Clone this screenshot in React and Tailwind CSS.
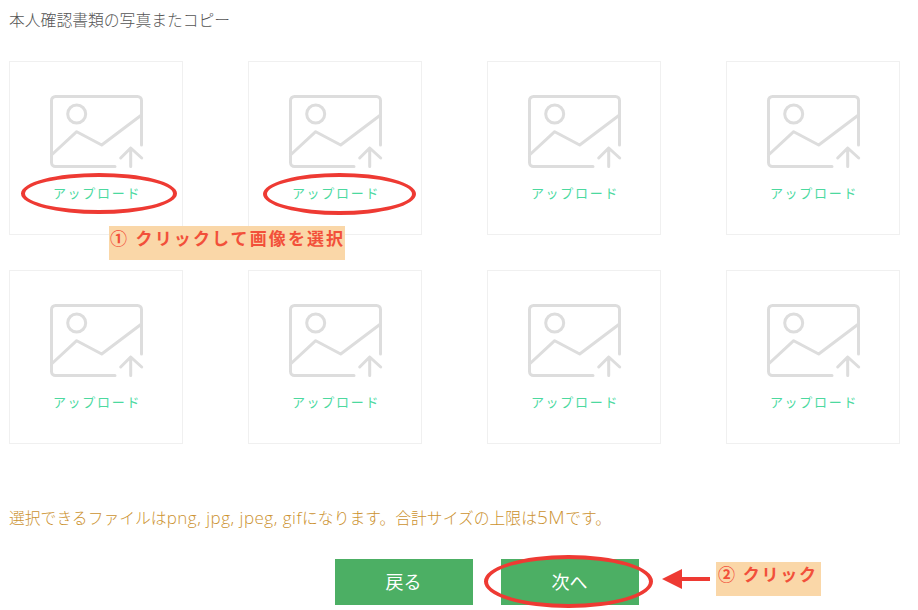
import React from "react";

const cjk = "font-['Open_Sans','Noto_Sans_CJK_JP',sans-serif]";

function UploadIcon() {
  return (
    <svg width="94" height="75" viewBox="0 0 94 75" fill="none" stroke="#dddddd" strokeWidth="3" strokeLinecap="round" strokeLinejoin="round">
      <path d="M65 71.5H5.5a4 4 0 0 1-4-4V5.5a4 4 0 0 1 4-4h82a4 4 0 0 1 4 4V50" />
      <path d="M1.5 60L26.7 36.7L51.7 50L91.5 20" />
      <circle cx="26.7" cy="19" r="9" />
      <path d="M80.7 71.5V53M70.7 63L80.7 53L91.7 63" />
    </svg>
  );
}

function UploadCard() {
  return (
    <div className="w-[174px] h-[174px] border border-[#f0f0f0] flex flex-col items-center pt-[33px]">
      <div className="pl-[2px]">
        <UploadIcon />
      </div>
      <span className="mt-[13px] pl-[2px] text-[13px] leading-[20px] tracking-[1.7px] text-[#4cd99f]">アップロード</span>
    </div>
  );
}

export default function App() {
  return (
    <div className={`relative w-[918px] h-[610px] overflow-hidden bg-white pl-[9px] ${cjk}`}>
      <h1 className="h-[61px] pt-[8px] text-[15.8px] leading-[24px] font-light text-[#555555]">本人確認書類の写真またコピー</h1>

      <div className="grid grid-cols-[repeat(4,174px)] gap-x-[65px] gap-y-[35px]">
        {Array.from({ length: 8 }).map((_, i) => (
          <UploadCard key={i} />
        ))}
      </div>

      <p className="mt-[61px] h-[24px] text-[15.8px] leading-[24px] font-light whitespace-nowrap text-[#cc9230]">
        選択できるファイルは<span className="text-[17px] tracking-[0.5px]">png, jpg, jpeg, gif</span>になります。合計サイズの上限は<span className="text-[19px] tracking-[0.5px]">5M</span>です。
      </p>

      <div className="mt-[30px] ml-[326px] flex gap-[28px]">
        <button className="w-[138px] h-[46px] pr-[1px] bg-[#4caf64] text-white text-[18px]">戻る</button>
        <button className="w-[138px] h-[46px] pr-[1px] bg-[#4caf64] text-white text-[18px]">次へ</button>
      </div>

      {/* hand drawn annotations on top of the screenshot */}
      <div className="absolute left-[21px] top-[173px] w-[156px] h-[41px] rounded-[50%] border-[4px] border-[#ee3a33]" />
      <div className="absolute left-[263px] top-[173px] w-[153px] h-[42px] rounded-[50%] border-[4px] border-[#ee3a33]" />
      <div className="absolute left-[484px] top-[555px] w-[169px] h-[53px] rounded-[50%] border-[4px] border-[#ee3a33]" />

      <div className="absolute left-[109px] top-[226px] w-[236px] h-[34px] bg-[#fad7a8] pl-[1px] text-[17px] leading-[25px] font-bold tracking-[2.1px] whitespace-nowrap text-[#f2503a]">
        ① クリックして画像を選択
      </div>
      <div className="absolute left-[716px] top-[562px] w-[105px] h-[34px] bg-[#fad7a8] pl-[2px] text-[17px] leading-[26px] font-bold tracking-[1.7px] whitespace-nowrap text-[#f2503a]">
        ② クリック
      </div>

      <svg className="absolute left-[660px] top-[566px]" width="52" height="26" viewBox="0 0 52 26">
        <path d="M2 13L22 3V11H50V15H22V23Z" fill="#ee3a33" />
      </svg>
    </div>
  );
}
